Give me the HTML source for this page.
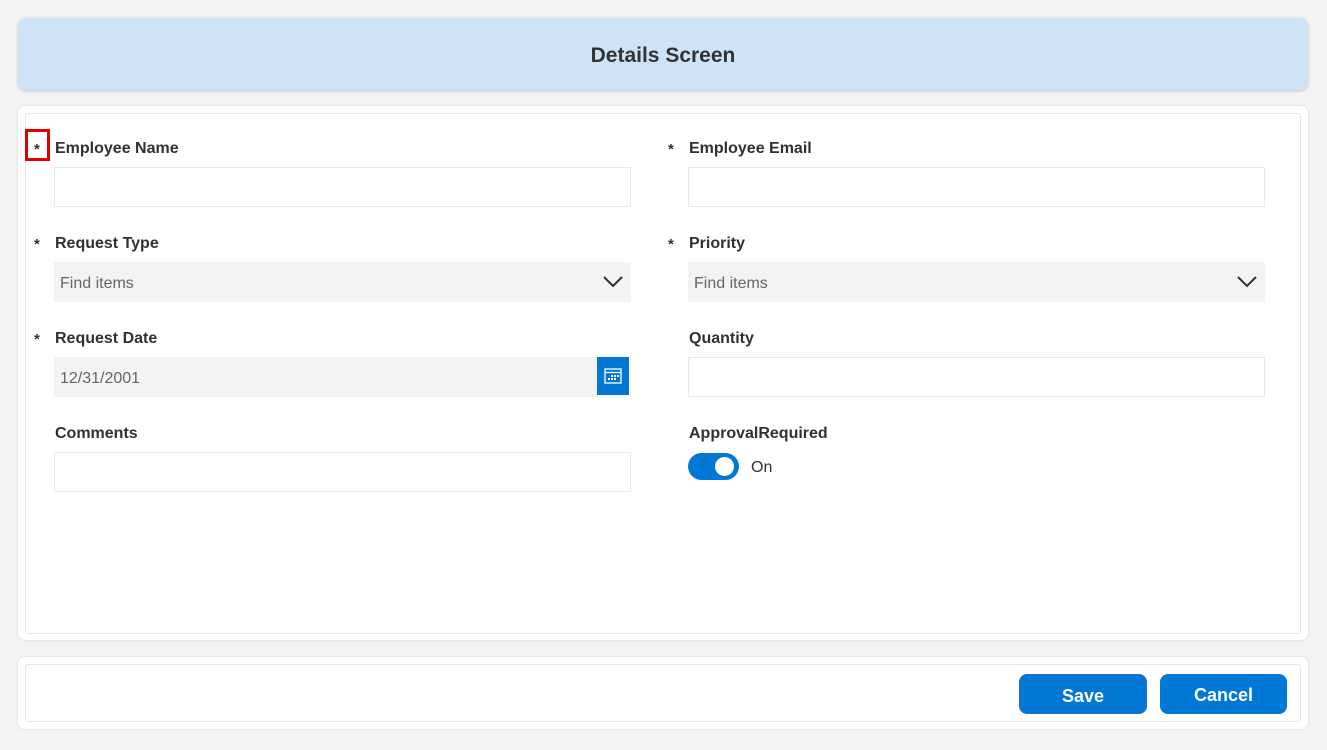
<!DOCTYPE html>
<html><head><style>
body{margin:0;width:1327px;height:750px;background:#f3f3f3;font-family:"Liberation Sans",sans-serif;position:relative;overflow:hidden;color:#323130}
.a{position:absolute;box-sizing:border-box}
.hdr{left:18px;top:18px;width:1290px;height:72px;background:#cfe3f6;border-radius:8px;box-shadow:0 1px 3px rgba(0,0,0,.2);text-align:center;line-height:75px;font-weight:bold;font-size:21px;color:#333}
.card{background:#fff;border-radius:7px;box-shadow:0 0 2px rgba(0,0,0,.15)}
.inner{border:1px solid #e6e6e6;border-radius:3px;background:#fff}
.lbl{font-size:16px;font-weight:bold;color:#323130}
.star{font-size:15px;font-weight:bold}
.inp{border:1px solid #e9e9e9;background:#fff;height:40px;width:577px}
.dd{background:#f3f3f3;height:40px;width:577px;font-size:16px;color:#666;line-height:43px;padding-left:6px}
.btn{background:#0078d4;color:#fff;font-weight:bold;font-size:18px;text-align:center;line-height:42px;border-radius:8px;height:40px}
</style></head><body>
<div class="a hdr">Details Screen</div>
<div class="a card" style="left:18px;top:106px;width:1290px;height:534px"></div>
<div class="a inner" style="left:25px;top:113px;width:1276px;height:521px"></div>
<div class="a card" style="left:18px;top:657px;width:1290px;height:72px"></div>
<div class="a inner" style="left:25px;top:664px;width:1276px;height:58px"></div>

<div class="a" style="left:25px;top:129px;width:25px;height:32px;border:3px solid #e00000"></div>
<div class="a star" style="left:34px;top:141px">*</div>
<div class="a lbl" style="left:55px;top:140px">Employee Name</div>
<div class="a inp" style="left:54px;top:167px"></div>
<div class="a star" style="left:668px;top:141px">*</div>
<div class="a lbl" style="left:689px;top:140px">Employee Email</div>
<div class="a inp" style="left:688px;top:167px"></div>

<div class="a star" style="left:34px;top:236px">*</div>
<div class="a lbl" style="left:55px;top:235px">Request Type</div>
<div class="a dd" style="left:54px;top:262px">Find items</div>
<svg class="a" style="left:603px;top:275px" width="20" height="14"><path d="M1 2l9 9 9-9" fill="none" stroke="#323130" stroke-width="2"/></svg>
<div class="a star" style="left:668px;top:236px">*</div>
<div class="a lbl" style="left:689px;top:235px">Priority</div>
<div class="a dd" style="left:688px;top:262px">Find items</div>
<svg class="a" style="left:1237px;top:275px" width="20" height="14"><path d="M1 2l9 9 9-9" fill="none" stroke="#323130" stroke-width="2"/></svg>

<div class="a star" style="left:34px;top:331px">*</div>
<div class="a lbl" style="left:55px;top:330px">Request Date</div>
<div class="a dd" style="left:54px;top:357px;width:544px">12/31/2001</div>
<div class="a" style="left:597px;top:357px;width:32px;height:38px;background:#0078d4"></div>
<svg class="a" style="left:604px;top:368px" width="18" height="16"><rect x="1" y="1" width="16" height="14" fill="none" stroke="#fff" stroke-width="1.3"/><line x1="1" y1="4.5" x2="17" y2="4.5" stroke="#fff" stroke-width="1.3"/><g fill="#fff"><rect x="7" y="7" width="2" height="2"/><rect x="10" y="7" width="2" height="2"/><rect x="13" y="7" width="2" height="2"/><rect x="4" y="10" width="2" height="2"/><rect x="7" y="10" width="2" height="2"/><rect x="10" y="10" width="2" height="2"/></g></svg>
<div class="a lbl" style="left:689px;top:330px">Quantity</div>
<div class="a inp" style="left:688px;top:357px"></div>

<div class="a lbl" style="left:55px;top:425px">Comments</div>
<div class="a inp" style="left:54px;top:452px"></div>
<div class="a lbl" style="left:689px;top:425px">ApprovalRequired</div>
<div class="a" style="left:688px;top:453px;width:51px;height:27px;border-radius:14px;background:#0078d4"></div>
<div class="a" style="left:715px;top:457px;width:19px;height:19px;border-radius:50%;background:#fff"></div>
<div class="a" style="left:751px;top:459px;font-size:16px">On</div>

<div class="a btn" style="left:1019px;top:674px;width:128px;border:1px solid #2a6bbf">Save</div>
<div class="a btn" style="left:1160px;top:674px;width:127px">Cancel</div>
</body></html>
